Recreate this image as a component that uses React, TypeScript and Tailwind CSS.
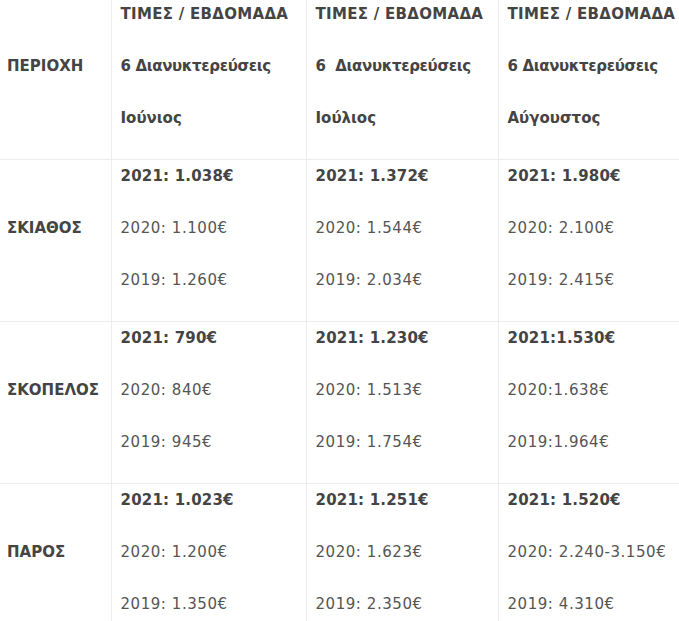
import React from "react";

const header = [
  ["ΤΙΜΕΣ / ΕΒΔΟΜΑΔΑ", "6 Διανυκτερεύσεις", "Ιούνιος"],
  ["ΤΙΜΕΣ / ΕΒΔΟΜΑΔΑ", "6\u00a0 Διανυκτερεύσεις", "Ιούλιος"],
  ["ΤΙΜΕΣ / ΕΒΔΟΜΑΔΑ", "6 Διανυκτερεύσεις", "Αύγουστος"],
];

const headerTracking = ["tracking-[0.3px]", "tracking-[-0.35px]", "tracking-normal"];

const rows: { name: string; cells: string[][] }[] = [
  {
    name: "ΣΚΙΑΘΟΣ",
    cells: [
      ["2021: 1.038€", "2020: 1.100€", "2019: 1.260€"],
      ["2021: 1.372€", "2020: 1.544€", "2019: 2.034€"],
      ["2021: 1.980€", "2020: 2.100€", "2019: 2.415€"],
    ],
  },
  {
    name: "ΣΚΟΠΕΛΟΣ",
    cells: [
      ["2021: 790€", "2020: 840€", "2019: 945€"],
      ["2021: 1.230€", "2020: 1.513€", "2019: 1.754€"],
      ["2021:1.530€", "2020:1.638€", "2019:1.964€"],
    ],
  },
  {
    name: "ΠΑΡΟΣ",
    cells: [
      ["2021: 1.023€", "2020: 1.200€", "2019: 1.350€"],
      ["2021: 1.251€", "2020: 1.623€", "2019: 2.350€"],
      ["2021: 1.520€", "2020: 2.240-3.150€", "2019: 4.310€"],
    ],
  },
];

const widths = ["w-[111px]", "w-[195px]", "w-[192px]", "w-[192px]"];

export default function App() {
  return (
    <div
      className="w-[679px] h-[621px] overflow-hidden bg-white text-[15px] text-[#555]"
      style={{ fontFamily: '"DejaVu Sans", Verdana, sans-serif' }}
    >
      <table className="border-collapse w-[690px] table-fixed">
        <colgroup>
          {widths.map((w, i) => (
            <col key={i} className={w} />
          ))}
        </colgroup>
        <tbody>
          <tr>
            <td className="align-middle pl-[7px] pr-2 pt-[1px] pb-[2px] border-r border-b border-[#ececec]">
              <p className="leading-[26px] mb-[26px] font-bold text-[#444]">ΠΕΡΙΟΧΗ</p>
            </td>
            {header.map((h, i) => (
              <td
                key={i}
                className="align-middle pl-[9px] pr-1 pt-[1px] pb-[2px] border-r border-b border-[#ececec]"
              >
                {h.map((l, j) => (
                  <p
                    key={j}
                    className={
                      "leading-[26px] mb-[26px] font-bold text-[#444] whitespace-nowrap " +
                      headerTracking[j]
                    }
                  >
                    {l}
                  </p>
                ))}
              </td>
            ))}
          </tr>
          {rows.map((r, ri) => (
            <tr key={ri}>
              <td className="align-middle pl-[7px] pr-2 pt-[3px] pb-[2px] border-r border-b border-[#ececec]">
                <p className="leading-[26px] mb-[26px] font-bold text-[#444]">{r.name}</p>
              </td>
              {r.cells.map((c, ci) => (
                <td
                  key={ci}
                  className="align-middle pl-[9px] pr-1 pt-[3px] pb-[2px] border-r border-b border-[#ececec]"
                >
                  {c.map((l, li) => (
                    <p
                      key={li}
                      className={
                        "leading-[26px] mb-[26px] whitespace-nowrap " +
                        (li === 0
                          ? "font-bold text-[#444] tracking-[0.2px]"
                          : "tracking-[0.55px]")
                      }
                    >
                      {l}
                    </p>
                  ))}
                </td>
              ))}
            </tr>
          ))}
        </tbody>
      </table>
    </div>
  );
}
